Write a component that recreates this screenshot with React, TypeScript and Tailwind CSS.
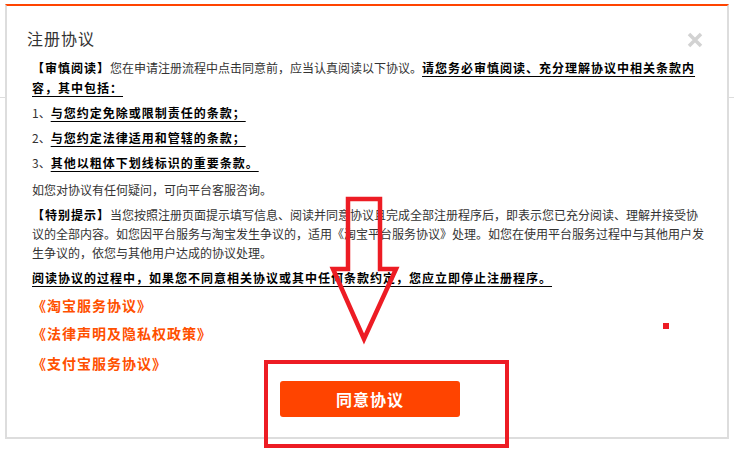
const font = { fontFamily: '"Noto Sans CJK SC", "Noto Sans", sans-serif' };

const items = [
  "与您约定免除或限制责任的条款；",
  "与您约定法律适用和管辖的条款；",
  "其他以粗体下划线标识的重要条款。",
];

function CloseIcon() {
  return (
    <svg width="16" height="16" viewBox="0 0 16 16" aria-hidden="true">
      <path d="M2 2 L14 14 M14 2 L2 14" stroke="#d2d2d2" strokeWidth="3.5" strokeLinecap="butt" />
    </svg>
  );
}

function Annotations() {
  // red marks drawn on top of the screenshot
  return (
    <svg
      className="pointer-events-none absolute left-0 top-0"
      width="734"
      height="466"
      viewBox="0 0 734 466"
      aria-hidden="true"
    >
      <polygon
        points="348,199 380,199 380,269 396,269 364,339 333,269 348,269"
        fill="none"
        stroke="#ed1c24"
        strokeWidth="4.5"
        strokeLinejoin="miter"
      />
      <rect x="266" y="362" width="241" height="84" fill="none" stroke="#ed1c24" strokeWidth="4" />
      <rect x="663" y="323" width="6" height="6" fill="#ed1c24" />
    </svg>
  );
}

export default function App() {
  return (
    <div className="relative h-[466px] w-[734px] overflow-hidden bg-white" style={font}>
      <div className="absolute left-0 top-[97px] h-px w-full bg-[#dddddd]" />

      <section className="relative ml-[5px] mt-[4px] h-[435px] w-[724px] border-2 border-[#dddddd] border-t-[#ff4400] bg-white">
        <button type="button" aria-label="关闭" className="absolute right-[24px] top-[26px] flex h-[16px] w-[16px]">
          <CloseIcon />
        </button>

        <h2 className="ml-[20px] pt-[20px] text-[16px] leading-[24px] tracking-[1px] text-[#333333]">注册协议</h2>

        <div className="ml-[25px] w-[674px] text-[12px] text-[#333333]">
          <p className="mt-[8px] leading-[20px]">
            <b className="font-bold tracking-[1px] text-black">【审慎阅读】</b>
            您在申请注册流程中点击同意前，应当认真阅读以下协议。
            <b className="font-bold tracking-[1px] text-black underline underline-offset-[3px]">
              请您务必审慎阅读、充分理解协议中相关条款内容，其中包括：
            </b>
          </p>

          {items.map((text, i) => (
            <p key={text} className="mt-[5px] leading-[20px]">
              {i + 1}、
              <b className="font-bold tracking-[1px] text-black underline underline-offset-[3px]">{text}</b>
            </p>
          ))}

          <p className="mt-[7px] leading-[20px]">如您对协议有任何疑问，可向平台客服咨询。</p>

          <p className="mt-[5px] leading-[19px]">
            <b className="font-bold tracking-[1px] text-black">【特别提示】</b>
            当您按照注册页面提示填写信息、阅读并同意协议且完成全部注册程序后，即表示您已充分阅读、理解并接受协议的全部内容。如您因平台服务与淘宝发生争议的，适用《淘宝平台服务协议》处理。如您在使用平台服务过程中与其他用户发生争议的，依您与其他用户达成的协议处理。
          </p>

          <p className="mt-[6px] leading-[20px]">
            <b className="font-bold tracking-[1px] text-black underline underline-offset-[3px]">
              阅读协议的过程中，如果您不同意相关协议或其中任何条款约定，您应立即停止注册程序。
            </b>
          </p>

          <div className="text-[14px] font-bold leading-[20px] tracking-[1px] text-[#ff5000]">
            <a className="mt-[7px] block">《淘宝服务协议》</a>
            <a className="mt-[8px] block">《法律声明及隐私权政策》</a>
            <a className="mt-[10px] block">《支付宝服务协议》</a>
          </div>

          <button
            type="button"
            className="ml-[248px] mt-[8px] flex h-[36px] w-[180px] items-center justify-center rounded-[3px] bg-[#ff4400] text-[16px] font-bold tracking-[1px] text-white"
          >
            同意协议
          </button>
        </div>
      </section>

      <Annotations />
    </div>
  );
}
